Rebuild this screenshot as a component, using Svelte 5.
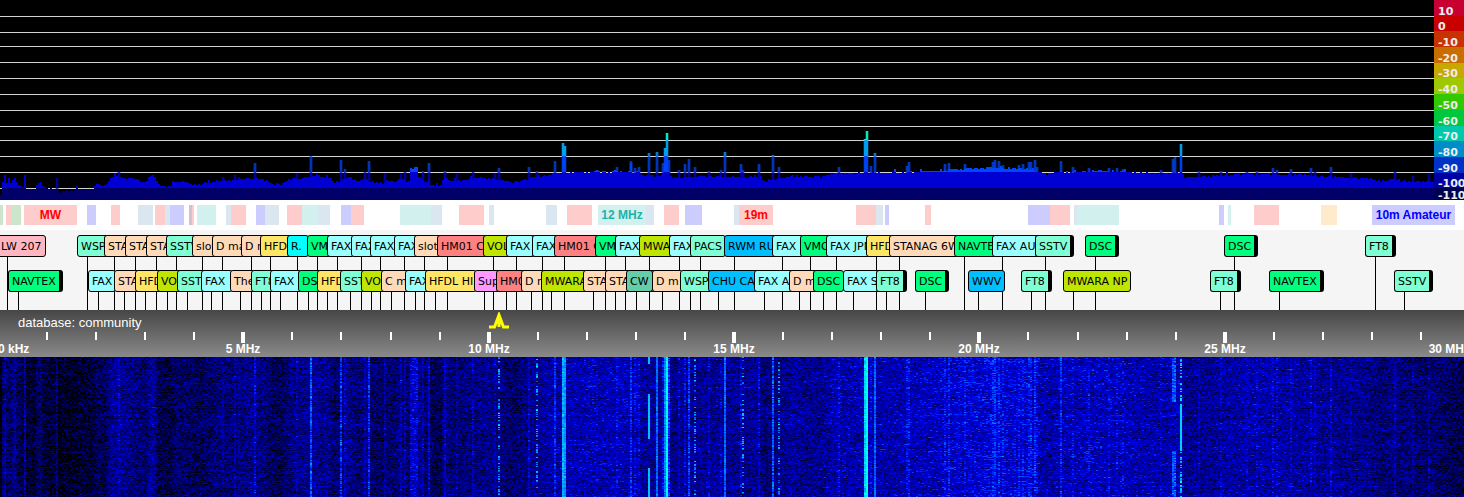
<script>
  import { onMount } from "svelte";

  // all x values below are in display bins, 0 to span
  const span = 1464;
  const scaleWidth = 30;

  let spectrum;
  let waterfall;

  const pct = (x) => (x / span) * 100 + "%";

  const levels = [
    { db: "10", color: "#c80032" },
    { db: "0", color: "#c80000" },
    { db: "-10", color: "#c83200" },
    { db: "-20", color: "#c86e00" },
    { db: "-30", color: "#c8a800" },
    { db: "-40", color: "#a0c800" },
    { db: "-50", color: "#32c800" },
    { db: "-60", color: "#00c83c" },
    { db: "-70", color: "#00c8aa" },
    { db: "-80", color: "#008cc8" },
    { db: "-90", color: "#0032c8" },
    { db: "-100", color: "#0000a0" },
    { db: "-110", color: "#000050" },
  ];

  const gridLines = [16, 32, 46, 62, 78, 94, 110, 126, 140, 156, 172, 188];

  // start, end, kind, name
  const bands = [
    [0, 3, "beacon"], [6, 12, "broadcast"], [12, 21, "beacon"],
    [24, 77, "broadcast", "MW"], [87, 96, "amateur"], [111, 120, "broadcast"],
    [138, 153, "aero"], [155, 165, "broadcast"], [165, 170, "aero"],
    [170, 184, "amateur"], [189, 192, "mixed"], [192, 194, "broadcast"],
    [197, 216, "marine"], [226, 231, "aero"], [231, 246, "broadcast"],
    [256, 265, "amateur"], [265, 279, "aero"], [287, 302, "broadcast"],
    [302, 318, "marine"], [318, 330, "aero"], [341, 351, "amateur"],
    [351, 364, "broadcast"], [400, 431, "marine"], [431, 442, "aero"],
    [459, 484, "broadcast"], [489, 494, "aero"], [546, 557, "aero"],
    [567, 592, "broadcast"], [598, 646, "marine", "12 MHz"], [646, 654, "aero"],
    [664, 679, "broadcast"], [685, 702, "amateur"], [734, 739, "aero"],
    [739, 773, "broadcast", "19m"], [856, 876, "broadcast"], [876, 883, "aero"],
    [885, 889, "amateur"], [925, 931, "broadcast"], [1028, 1050, "amateur"],
    [1050, 1070, "broadcast"], [1074, 1077, "aero"], [1077, 1119, "marine"],
    [1219, 1224, "amateur"], [1228, 1231, "marine"], [1254, 1279, "broadcast"],
    [1321, 1337, "citizen"], [1372, 1455, "amateur", "10m Amateur"],
  ];

  // start, text, kind, has extension
  const topRow = [
    [-3, "LW 207", "lw"], [77, "WSPR", "digi"], [104, "STANAG", "mil"],
    [125, "STANAG", "mil"], [146, "STANAG", "mil"], [166, "SSTV", "digi"],
    [192, "slot", "mil"], [212, "D mar", "mil"], [241, "D mar", "mil"],
    [260, "HFDL", "hfdl"], [287, "R.\u00a0", "radio"], [307, "VMC", "safety"],
    [327, "FAX", "fax"], [351, "FAX", "fax"], [370, "FAX", "fax"],
    [394, "FAX", "fax"], [414, "slot", "mil"], [437, "HM01 CU", "numbers"],
    [483, "VOLMET", "volmet"], [506, "FAX", "fax"], [532, "FAX", "fax"],
    [554, "HM01 CU", "numbers"], [595, "VMC", "safety"], [615, "FAX", "fax"],
    [639, "MWARA", "volmet"], [669, "FAX", "fax"], [690, "PACS", "digi"],
    [724, "RWM RUS", "time"], [772, "FAX\u00a0", "fax"], [800, "VMC", "safety"],
    [826, "FAX JPN", "fax"], [866, "HFDL", "hfdl"], [889, "STANAG 6W", "mil"],
    [954, "NAVTEX", "safety"], [992, "FAX AUS", "fax"], [1035, "SSTV", "digi", true],
    [1085, "DSC", "safety", true], [1224, "DSC", "safety", true],
    [1365, "FT8", "digi", true],
  ];

  const bottomRow = [
    [8, "NAVTEX", "safety", true], [88, "FAX", "fax"], [114, "STANAG", "mil"],
    [135, "HFDL", "hfdl"], [157, "VOLMET", "volmet"], [177, "SSTV", "digi"],
    [201, "FAX\u00a0", "fax"], [230, "The", "mil"], [251, "FT8", "digi"],
    [270, "FAX\u00a0", "fax"], [298, "DSC", "safety"], [317, "HFDL", "hfdl"],
    [340, "SSTV", "digi"], [361, "VOLMET", "volmet"], [381, "C mar", "mil"],
    [405, "FAX", "fax"], [425, "HFDL HI", "hfdl"], [474, "Sup", "super"],
    [496, "HM01", "numbers"], [521, "D mar", "mil"], [541, "MWARA", "volmet"],
    [583, "STANAG", "mil"], [605, "STANAG", "mil"], [626, "CW", "cw"],
    [652, "D m", "mil"], [680, "WSPR", "digi"], [708, "CHU CAN", "time"],
    [754, "FAX AU", "fax"], [789, "D mar", "mil"], [813, "DSC", "safety"],
    [843, "FAX SA", "fax"], [876, "FT8", "digi", true], [915, "DSC", "safety", true],
    [968, "WWV", "time"], [1021, "FT8", "digi", true], [1063, "MWARA NP", "volmet"],
    [1210, "FT8", "digi", true], [1269, "NAVTEX", "safety", true],
    [1394, "SSTV", "digi", true],
  ];

  const ticks = [];
  for (let mhz = 0; mhz <= 29; mhz++) {
    ticks.push({
      x: Math.round(mhz * 49.07 - 2),
      major: mhz % 5 === 0,
      text: mhz && mhz % 5 === 0 ? mhz + " MHz" : "",
    });
  }

  // noise floor as x, top of trace
  const floor = [
    [0, 196], [2, 182], [4, 176], [6, 183], [10, 183], [14, 177], [17, 184],
    [22, 187], [24, 175], [26, 189], [34, 190], [36, 184], [40, 182], [43, 188],
    [57, 189], [58, 193], [64, 190], [93, 189], [95, 184], [104, 186],
    [110, 178], [118, 176], [122, 177], [132, 179], [145, 183], [149, 176],
    [153, 176], [157, 184], [160, 186], [170, 186], [176, 182], [190, 184],
    [200, 185], [215, 181], [235, 180], [250, 178], [265, 180], [272, 184],
    [280, 184], [290, 179], [310, 177], [316, 174], [322, 178], [327, 176],
    [333, 182], [340, 181], [346, 177], [358, 181], [364, 178], [370, 182],
    [383, 183], [387, 180], [392, 182], [400, 179], [408, 182], [410, 169],
    [416, 168], [418, 177], [424, 183], [427, 180], [431, 185], [440, 186],
    [444, 176], [450, 182], [460, 180], [480, 178], [500, 179], [506, 182],
    [516, 182], [524, 180], [532, 177], [560, 173], [600, 172], [636, 172],
    [643, 176], [660, 176], [664, 168], [668, 172], [672, 178], [690, 177],
    [720, 176], [740, 178], [755, 176], [765, 181], [790, 176], [820, 177],
    [830, 174], [860, 173], [900, 173], [930, 171], [960, 169], [980, 168],
    [1000, 168], [1030, 169], [1036, 171], [1045, 174], [1060, 172],
    [1100, 171], [1130, 172], [1160, 174], [1181, 172], [1184, 177],
    [1200, 177], [1240, 174], [1280, 174], [1320, 176], [1350, 178],
    [1365, 178], [1380, 181], [1395, 179], [1400, 181], [1434, 182],
    [1464, 186],
  ];

  const peaks = [
    [56, 178], [119, 172], [222, 177], [234, 175], [238, 177], [254, 163],
    [296, 173], [310, 156], [340, 160], [344, 169], [365, 172], [369, 161],
    [385, 173], [400, 174], [404, 172], [422, 171], [428, 163], [444, 171],
    [456, 174], [473, 172], [494, 173], [498, 168], [528, 167], [536, 171],
    [554, 161], [562, 143], [564, 146], [596, 170], [616, 167], [630, 163],
    [631, 161], [635, 168], [638, 167], [648, 153], [657, 152], [662, 163],
    [664, 148], [666, 133], [668, 160], [679, 170], [684, 164], [689, 159],
    [694, 167], [709, 171], [720, 170], [725, 152], [741, 164], [743, 170],
    [759, 164], [772, 155], [779, 167], [838, 167], [864, 139], [866, 131],
    [870, 166], [874, 153], [906, 166], [909, 162], [944, 164], [948, 163],
    [965, 164], [992, 162], [995, 160], [998, 161], [1002, 165], [1019, 165],
    [1023, 164], [1028, 162], [1031, 162], [1034, 160], [1036, 167],
    [1061, 161], [1072, 167], [1088, 168], [1108, 168], [1117, 168],
    [1123, 169], [1160, 170], [1172, 159], [1174, 157], [1181, 144],
    [1199, 171], [1220, 171], [1246, 172], [1257, 171], [1272, 168],
    [1277, 170], [1291, 169], [1311, 168], [1315, 172], [1330, 167],
    [1350, 173], [1394, 172], [1412, 176], [1428, 174],
  ];

  // carriers that blink on and off instead of running down the whole picture
  const dotted = [498, 536, 694, 742, 778];
  const keyed = {
    648: [[0, 7], [37, 82], [111, 140]],
    1172: [[0, 45], [94, 140]],
    1174: [[0, 45], [94, 140]],
    1180: [[47, 94]],
  };

  function random(seed) {
    let s = seed;
    return () => {
      s = (s * 1664525 + 1013904223) >>> 0;
      return s / 4294967296;
    };
  }

  function floorAt(x) {
    for (let i = 1; i < floor.length; i++) {
      if (x <= floor[i][0]) {
        const [x0, y0] = floor[i - 1];
        const [x1, y1] = floor[i];
        return y0 + ((y1 - y0) * (x - x0)) / (x1 - x0);
      }
    }
    return floor[floor.length - 1][1];
  }

  const even = (x) => x - (x % 2);

  function drawSpectrum() {
    const ctx = spectrum.getContext("2d");
    const width = spectrum.width;
    const next = random(7);

    ctx.fillStyle = "#000";
    ctx.fillRect(0, 0, width, 200);
    ctx.fillStyle = "#d2d2d2";
    gridLines.forEach((y) => ctx.fillRect(0, y, width, 1));

    const bar = (x, w, top) => {
      const zones = [
        [126, 140, "#00ffc8"],
        [140, 156, "#00aaff"],
        [156, 172, "#0046ff"],
        [172, 188, "#0000d2"],
        [188, 200, "#000068"],
      ];
      zones.forEach(([from, to, color]) => {
        const y = Math.max(from, top);
        if (y < to) {
          ctx.fillStyle = color;
          ctx.fillRect(x, y, w, to - y);
        }
      });
    };

    for (let x = 0; x < width; x += 2) {
      let y = floorAt(x) + next() * 2 - 1;
      if (next() > 0.93) y -= next() * 4;
      bar(x, 2, Math.round(y));
    }
    peaks.forEach(([x, y]) => {
      ctx.globalAlpha = 0.25;
      bar(even(x) - 1, 4, y);
      ctx.globalAlpha = y < 150 ? 0.9 : 0.65;
      bar(even(x), 2, y);
    });
    ctx.globalAlpha = 1;
  }

  function drawWaterfall() {
    const ctx = waterfall.getContext("2d");
    const { width, height } = waterfall;
    const image = ctx.createImageData(width, height);
    const next = random(42);
    const strength = {};
    peaks.forEach(([x, y]) => {
      strength[even(x)] = Math.max(strength[even(x)] ?? 0, 200 - y);
    });

    for (let row = 0; row < height; row++) {
      const streak = next() * 24 - 12;
      let drift = 0;
      for (let x = 0; x < width; x += 2) {
        drift = drift * 0.6 + (next() - 0.5) * 55;
        const base = 200 - floorAt(x);
        let level = base;
        const peak = strength[x];
        let noise = (next() + next() - 1) * 85 + drift + streak;
        if (peak) {
          // weak carriers fade into the floor
          level = peak > 38 ? peak - 1 : (peak + base) / 2 + 2;
          noise *= peak > 45 ? 0.6 : 1;
          if (dotted.includes(x)) {
            level = next() > 0.65 ? 52 : base;
          } else if (keyed[x]) {
            const on = keyed[x].some(([a, b]) => row >= a && row < b);
            if (x === 1180) {
              level = on ? 60 : next() > 0.55 ? 58 : base;
            } else {
              level = on ? (x === 648 ? 58 : 44) : base;
            }
            if (on && (x === 648 || x === 1180)) noise *= 0.2;
          }
        }
        const v = Math.max(0, (level - 4) * 7.5 + noise);
        const b = v > 480 ? 255 - Math.min(95, (v - 480) * 2) : Math.min(255, v);
        const g = Math.min(255, Math.max(0, v - 230) * 1.1);
        for (let i = 0; i < 2; i++) {
          const p = (row * width + x + i) * 4;
          image.data[p] = 0;
          image.data[p + 1] = g;
          image.data[p + 2] = b;
          image.data[p + 3] = 255;
        }
      }
    }
    ctx.putImageData(image, 0, 0);
  }

  onMount(() => {
    drawSpectrum();
    drawWaterfall();
  });
</script>

<div class="receiver">
  <div class="spectrum">
    <canvas bind:this={spectrum} width={span - scaleWidth} height="200"></canvas>
    <div class="levels">
      {#each levels as level}
        <div class="level" class:last={level.db === "-110"} style:background={level.color}>
          {level.db}
        </div>
      {/each}
    </div>
  </div>

  <div class="bands">
    {#each bands as [start, end, kind, name]}
      <div class="band {kind}" style:left={pct(start)} style:width={pct(end - start)}>
        {name ?? ""}
      </div>
    {/each}
  </div>

  <div class="labels">
    {#each [topRow, bottomRow] as row, i}
      {#each row as [x]}
        <div class="stem" class:low={i === 1} style:left={pct(x + 10)}></div>
      {/each}
    {/each}
    {#each [topRow, bottomRow] as row, i}
      {#each row as [x, text, kind, ext]}
        <button class="label {kind}" class:low={i === 1} class:ext style:left={pct(x)}>
          {text}
        </button>
      {/each}
    {/each}
  </div>

  <div class="scale">
    <div class="database">database: community</div>
    {#each ticks as tick}
      <div class="tick" class:major={tick.major} style:left={pct(tick.x)}></div>
      {#if tick.text}
        <div class="freq" style:left={pct(tick.x)}>{tick.text}</div>
      {/if}
    {/each}
    <div class="freq first">0 kHz</div>
    <div class="freq end">30 MHz</div>
    <svg class="carrier" style:left={pct(499)} viewBox="0 0 20 17" aria-hidden="true">
      <path
        d="M9.5 0H10.5L15.5 13.5H20V16.5H13.5L11.5 11.5V15H8.5V11.5L6.5 16.5H0V13.5H4.5Z"
        fill="#ff0"
      />
    </svg>
  </div>

  <canvas class="waterfall" bind:this={waterfall} width={span} height="140"></canvas>
</div>

<style>
  :global(body) {
    margin: 0;
    background: #000;
  }

  .receiver {
    overflow: hidden;
    font-family: "Liberation Sans", Arial, sans-serif;
  }

  .spectrum {
    display: flex;
    height: 200px;
    background: #000;
  }

  .spectrum canvas {
    flex: 1;
    min-width: 0;
    height: 200px;
    image-rendering: pixelated;
  }

  .levels {
    display: flex;
    flex-direction: column;
    width: 30px;
    overflow: hidden;
  }

  .level {
    display: flex;
    flex: 4 0 0;
    align-items: flex-end;
    padding-left: 4px;
    color: #eee;
    font: bold 11px/9px "DejaVu Sans", Verdana, sans-serif;
    white-space: nowrap;
  }

  .level.last {
    flex-grow: 3;
  }

  .bands {
    position: relative;
    height: 30px;
    background: #fff;
  }

  .band {
    position: absolute;
    top: 5px;
    height: 20px;
    font-size: 12px;
    font-weight: bold;
    line-height: 20px;
    text-align: center;
    white-space: nowrap;
  }

  .broadcast {
    background: #ffcccc;
    color: #f00;
  }

  .amateur {
    background: #ccccff;
    color: #00f;
  }

  .marine {
    background: #d2f0ee;
    color: #20b2aa;
  }

  .aero {
    background: #dae6f0;
  }

  .beacon {
    background: #cce6cc;
  }

  .citizen {
    background: #ffebcc;
  }

  .mixed {
    background: #d8bfcc;
  }

  .labels {
    position: relative;
    height: 80px;
    background: #f5f5f5;
  }

  .stem {
    position: absolute;
    top: 27px;
    bottom: 0;
    width: 1px;
    background: #000;
  }

  .stem.low {
    top: 62px;
  }

  .label {
    position: absolute;
    top: 5px;
    box-sizing: border-box;
    height: 22px;
    padding: 1px 3px 0;
    border: 1px solid #000;
    border-radius: 3px;
    color: #000;
    font: 11px/20px "DejaVu Sans", Verdana, sans-serif;
    white-space: nowrap;
    cursor: pointer;
  }

  .label.low {
    top: 40px;
  }

  .label.ext {
    border-right-width: 4px;
  }

  .lw {
    background: #ffb6c1;
  }

  .digi {
    background: #7fffd4;
  }

  .mil {
    background: #ffdab9;
  }

  .hfdl {
    background: #ffe566;
  }

  .radio {
    background: #00ffff;
  }

  .safety {
    background: #00ff7f;
  }

  .fax {
    background: #99ffff;
  }

  .numbers {
    background: #ff8080;
  }

  .volmet {
    background: #bfe600;
  }

  .super {
    background: #ff99ff;
  }

  .cw {
    background: #66cdaa;
  }

  .time {
    background: #00bfff;
  }

  .scale {
    position: relative;
    height: 47px;
    overflow: hidden;
    background: linear-gradient(#464646, #8a8a8a);
    color: #fff;
  }

  .database {
    padding: 4px 0 0 18px;
    font-size: 13px;
    line-height: 18px;
  }

  .tick {
    position: absolute;
    top: 22px;
    width: 2px;
    height: 8px;
    margin-left: -1px;
    background: #fff;
  }

  .tick.major {
    width: 4px;
    height: 11px;
    margin-left: -2px;
  }

  .freq {
    position: absolute;
    top: 32px;
    font-size: 12px;
    font-weight: bold;
    line-height: 15px;
    white-space: nowrap;
    transform: translateX(-50%);
  }

  .freq.first {
    left: -2px;
    transform: none;
  }

  .freq.end {
    right: -6px;
    transform: none;
  }

  .carrier {
    position: absolute;
    top: 2px;
    width: 20px;
    height: 17px;
    margin-left: -10px;
  }

  .waterfall {
    display: block;
    width: 100%;
    height: 140px;
    image-rendering: pixelated;
  }
</style>
